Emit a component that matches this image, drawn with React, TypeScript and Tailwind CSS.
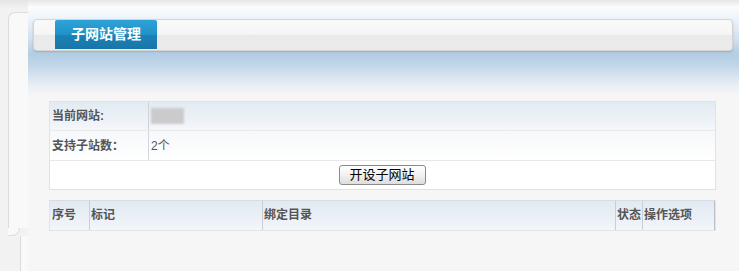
import React from "react";

const font = { fontFamily: '"Liberation Sans", "Noto Sans CJK SC", sans-serif' };

const App: React.FC = () => {
  return (
    <div
      className="flex w-[739px] h-[271px] overflow-hidden bg-[#f6f6f6] text-[12px] text-[#555]"
      style={font}
    >
      {/* left rail */}
      <div className="w-[28px] flex flex-col bg-[linear-gradient(#e4e4e4,#f2f2f2_8px,#f2f2f2)]">
        <div className="ml-[8px] mt-[12px] h-[216px] rounded-tl-[7px] border-l border-t border-[#dcdcdc] bg-[#f9f9f9]" />
        <div className="ml-[8px] h-[8px] rounded-br-[8px] border-b border-r border-[#dcdcdc] w-[12px] bg-[#f9f9f9]" />
        <div className="ml-[20px] flex-1 border-l border-[#dcdcdc] bg-[#f9f9f9]" />
      </div>

      {/* main */}
      <div className="flex-1 flex flex-col">
        <div className="h-[95px] pt-[19px] pl-[5px] pr-[6px] bg-[linear-gradient(#e6e6e6,#fbfcfd_7px,#f1f6fb_16px,#cfe0ee_40px,#b3cde3_54px,#c2d7e9_66px,#e6edf3_84px,#f6f6f6_95px)]">
          <div className="h-[32px] rounded-[4px] border border-[#d4d4d4] bg-[linear-gradient(#f9f9f9_0%,#f6f6f6_48%,#eaeaea_50%,#ebebeb_100%)] shadow-[0_1px_2px_rgba(0,0,0,0.18)] pl-[21px]">
            <div className="w-[102px] h-[29px] rounded-t-[2px] bg-[linear-gradient(#2ea3d8,#1f92c8_50%,#1a82b6_52%,#1876a8)] text-white font-bold text-[14px] leading-[29px] pl-[16px]">
              子网站管理
            </div>
          </div>
        </div>

        <div className="pl-[21px] pt-[6px]">
          {/* info table */}
          <div className="w-[667px] border border-[#e2e2e2] bg-white">
            <div className="flex h-[29px] border-b border-[#eaeaea] bg-[linear-gradient(#e2eaf3,#f4f7fa)]">
              <div className="w-[99px] border-r border-[#cdd3da] font-bold leading-[29px] pl-[2px]">当前网站:</div>
              <div className="flex items-center pl-[2px]">
                <div className="w-[33px] h-[16px] bg-[#cbcbcb] blur-[1px]" />
              </div>
            </div>
            <div className="flex h-[30px] border-b border-[#e8e8e8] bg-[linear-gradient(#f6f8fb,#ffffff)]">
              <div className="w-[99px] border-r border-[#d3d8de] font-bold leading-[30px] pl-[2px]">支持子站数：</div>
              <div className="leading-[30px] pl-[2px]">2个</div>
            </div>
            <div className="h-[28px] flex items-center justify-center">
              <button
                className="h-[20px] w-[87px] ml-[-1px] rounded-[3px] border border-[#8a8a8a] bg-[linear-gradient(#ffffff,#f1f1f1_50%,#dedede)] text-[13px] text-black leading-[18px]"
                style={font}
              >
                开设子网站
              </button>
            </div>
          </div>

          {/* list header */}
          <div className="mt-[10px] w-[667px] h-[31px] flex border border-[#e0e3e7] border-t-[#d8dce1] bg-[linear-gradient(#e2e9f2,#f3f6fa)] font-bold leading-[29px]">
            <div className="w-[40px] border-r border-[#c9ced5] pl-[2px]">序号</div>
            <div className="w-[173px] border-r border-[#c9ced5] pl-[1px]">标记</div>
            <div className="w-[353px] border-r border-[#c9ced5] pl-[1px]">绑定目录</div>
            <div className="w-[27px] border-r border-[#c9ced5] pl-[1px]">状态</div>
            <div className="flex-1 border-r border-[#b9c0c8] pl-[1px]">操作选项</div>
          </div>
        </div>
      </div>
    </div>
  );
};

export default App;
